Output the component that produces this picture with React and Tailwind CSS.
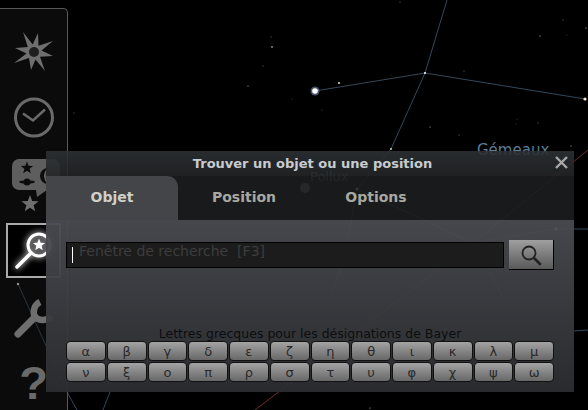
import React from 'react';

const GREEK = ['α','β','γ','δ','ε','ζ','η','θ','ι','κ','λ','μ','ν','ξ','ο','π','ρ','σ','τ','υ','φ','χ','ψ','ω'];

const STARS = [
  [271,37,0.4],[272,47,0.8],[263,66,0.4],[248,86,0.5],[339,83,1],[292,99,0.35],[322,110,0.35],
  [400,2,0.4],[391,75,0.3],[464,71,0.4],[563,20,0.4],[540,36,0.6],[567,35,0.3],[586,28,0.5],[517,119,0.35],[516,124,0.35],
  [538,123,0.4],[430,127,0.5],[459,135,0.4],[571,146,0.5],[391,149,0.9],[18,284,1.2],
  [214,372,0.4],[370,408,0.5],[74,113,0.4],
];

function Sky() {
  return (
    <svg className="absolute inset-0" width="588" height="410">
      <g stroke="#3a5062" strokeWidth="0.9" fill="none">
        <path d="M315 91 L425 73 L585 99" />
        <path d="M447 0 L425 73 L391 149 L357 189 L345 256 L330 300" />
        <path d="M357 189 L473 243 L556 229 L588 229" />
        <path d="M473 243 L505 300" />
        <path d="M18 284 L67 392 L77 410" />
        <path d="M574 331 L588 330" />
        <path d="M110 392 L103 410" />
      </g>
      <path d="M255 410 L473 243 L588 150" stroke="#7a3030" strokeWidth="0.9" fill="none" />
      {STARS.map(([x, y, r], i) => (
        <circle key={i} cx={x} cy={y} r={r} fill="#e8e4d8" />
      ))}
      <circle cx="315" cy="91" r="4.5" fill="#7f96c8" opacity="0.55" />
      <circle cx="315" cy="91" r="2.8" fill="#ffffff" />
      <circle cx="425" cy="73" r="1" fill="#ffffff" />
      <circle cx="585" cy="99" r="1.6" fill="#ffe8c0" />
      <circle cx="305" cy="188" r="5" fill="#ffffff" opacity="0.5" />
      <circle cx="357" cy="189" r="1.5" fill="#fff" />
      <circle cx="473" cy="243" r="1.5" fill="#fff" />
      <circle cx="556" cy="229" r="1.5" fill="#fff" />
      <circle cx="345" cy="256" r="1.5" fill="#fff" />
      <text x="477" y="155" fill="#5d7d94" fontSize="15" fontFamily="'DejaVu Sans', sans-serif">Gémeaux</text>
      <text x="310" y="181" fill="#7a7a7a" fontSize="13" fontFamily="'DejaVu Sans', sans-serif">Pollux</text>
    </svg>
  );
}

const star = (cx, cy, r) => {
  const pts = [];
  for (let i = 0; i < 10; i++) {
    const rad = i % 2 ? r * 0.42 : r;
    const a = -Math.PI / 2 + (i * Math.PI) / 5;
    pts.push(`${(cx + rad * Math.cos(a)).toFixed(1)},${(cy + rad * Math.sin(a)).toFixed(1)}`);
  }
  return pts.join(' ');
};

function Toolbar() {
  return (
    <div className="absolute left-0 top-2 h-[410px] w-[68px] overflow-hidden rounded-tr-[5px] border-r border-t border-[#5a5a5a] bg-[#1c1c1c]/40 pt-[10px]">
      <div className="flex h-[66px] items-center justify-center">
        <svg width="60" height="60" viewBox="3 22 60 60">
          <polygon fill="#6e6e6e" points="22,32 31.7,44.5 37,33 37.5,45.8 52,41 40.5,50.5 52,56 39,56.7 44,71 34.5,59.5 30,70 28,58 13,63 25.5,53.5 14,48 26.8,47" />
          <circle cx="33" cy="52" r="5" fill="#1e1e1e" />
        </svg>
      </div>
      <div className="flex h-[66px] items-center justify-center">
        <svg width="44" height="44" viewBox="0 0 44 44" fill="none" stroke="#6a6a6a" strokeWidth="3">
          <circle cx="22" cy="21.5" r="18.5" />
          <path d="M11 17.5 L21 24.5 L33 13.5" strokeWidth="2.5" />
        </svg>
      </div>
      <div className="h-[66px]">
        <svg width="60" height="66" viewBox="3 151 60 66" className="mx-auto">
          <rect x="11" y="159" width="48" height="31" rx="7" fill="#5e5e5e" />
          <path d="M35 190 L46 190 L36 197 Z" fill="#5e5e5e" />
          <polygon points={star(26, 168, 6.5)} fill="#0c0c0c" />
          <ellipse cx="26" cy="182" rx="8" ry="1.6" fill="#0c0c0c" />
          <circle cx="26" cy="182" r="3.5" fill="#0c0c0c" />
          <path d="M47 168 A8 8 0 1 0 47 184 A10 10 0 0 1 47 168 Z" fill="#0c0c0c" />
          <polygon points={star(29, 204, 9)} fill="#6e6e6e" />
        </svg>
      </div>
      <div className="flex h-[66px] items-center justify-center">
        <div className="flex h-[55px] w-[55px] items-center justify-center border-2 border-[#aaaaaa] bg-black">
          <svg className="drop-shadow-[0_0_3px_#ffffff]" width="51" height="51" viewBox="8 225 51 51" fill="none" stroke="#ffffff">
            <circle cx="39" cy="245" r="11" strokeWidth="3" />
            <path d="M31 253 L17 267" strokeWidth="3.5" strokeLinecap="round" />
            <polygon points={star(39, 245, 6.5)} fill="#ffffff" stroke="none" />
          </svg>
        </div>
      </div>
      <div className="flex h-[66px] items-center justify-center">
        <svg width="60" height="60" viewBox="3 286 60 60" fill="none" stroke="#6e6e6e" strokeWidth="6.5">
          <path d="M17 334 L34 317" strokeLinecap="round" strokeWidth="7" />
          <path d="M34 317 A11 11 0 0 1 39 302" />
          <path d="M34 317 A11 11 0 0 0 50 316" />
        </svg>
      </div>
      <div className="flex h-[66px] items-center justify-center font-['Liberation_Sans',sans-serif] text-[47px] font-bold leading-none text-[#6a6a6a]">
        ?
      </div>
    </div>
  );
}

function Tab({ label, active, className }) {
  return (
    <div
      className={`flex items-center justify-center pb-[1px] text-[14px] font-bold ${
        active ? 'rounded-tr-[11px] bg-[#46484c]/95 text-[#d0d0c8]' : 'text-[#a8a8a0]'
      } ${className}`}
    >
      {label}
    </div>
  );
}

function SearchDialog() {
  return (
    <div className="absolute left-[46px] top-[151px] flex h-[241px] w-[528px] flex-col font-['DejaVu_Sans',sans-serif]">
      <div className="relative flex h-[25px] items-center justify-center bg-gradient-to-b from-[#2d3134]/90 to-[#222426]/90 pl-[5px] text-[13px] font-bold text-[#c8ccd0]">
        Trouver un objet ou une position
        <svg className="absolute right-[6px] top-[5px]" width="13" height="13" viewBox="0 0 13 13" stroke="#a8a8a8" strokeWidth="2.4">
          <path d="M1 1 L12 12 M12 1 L1 12" />
        </svg>
      </div>
      <div className="flex h-[44px] bg-[#1c1d1e]/90">
        <Tab label="Objet" active className="w-[132px]" />
        <Tab label="Position" className="w-[132px]" />
        <Tab label="Options" className="w-[132px]" />
      </div>
      <div className="flex flex-1 flex-col bg-gradient-to-b from-[#4a4b50]/95 to-[#2c2d31]/95 px-5 pt-[22px]">
        <div className="flex items-start gap-[5px]">
          <div className="relative flex h-[26px] w-[438px] border border-black bg-[#1a1a1a]/95 pl-[12px] text-[14px] leading-[16px] text-[#3d3d3d]">
            <span className="absolute left-[5px] top-[4px] h-[16px] w-px bg-white" />
            <span className="whitespace-pre">Fenêtre de recherche  [F3]</span>
          </div>
          <button className="-mt-[2px] flex h-[30px] w-[45px] items-center justify-center border-b border-r border-black bg-gradient-to-b from-[#a0a0a0] to-[#5a5a5a]">
            <svg width="24" height="24" viewBox="0 0 24 24" fill="none" stroke="#222222">
              <circle cx="10" cy="10" r="6.5" strokeWidth="1.8" />
              <path d="M15 15 L21 21" strokeWidth="2.6" strokeLinecap="round" />
            </svg>
          </button>
        </div>
        <div className="mt-[56px] text-center text-[12.5px] leading-[15px] text-[#0c0d0f]">
          Lettres grecques pour les désignations de Bayer
        </div>
        <div className="grid w-[488px] grid-cols-12 gap-x-px gap-y-px">
          {GREEK.map(g => (
            <button
              key={g}
              className="flex h-[20px] items-center justify-center rounded-[4px] border border-[#111111] bg-gradient-to-b from-[#a4a4a4] to-[#686868] text-[13px] leading-none text-[#2a2a2a]"
            >
              {g}
            </button>
          ))}
        </div>
      </div>
    </div>
  );
}

export default function App() {
  return (
    <div className="relative h-[410px] w-[588px] overflow-hidden bg-black">
      <Sky />
      <Toolbar />
      <SearchDialog />
    </div>
  );
}
